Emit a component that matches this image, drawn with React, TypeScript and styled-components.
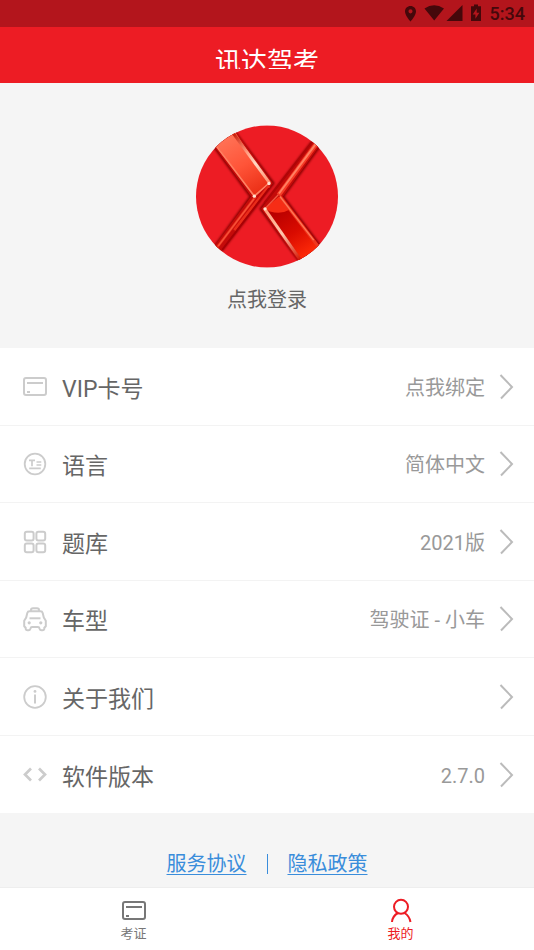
import React from "react";
import styled, { createGlobalStyle } from "styled-components";

const GlobalStyle = createGlobalStyle`
  * { box-sizing: border-box; }
  body {
    margin: 0;
    background: #f5f5f5;
    font-family: Roboto, "Noto Sans CJK SC", sans-serif;
    color: #666;
  }
  button { font: inherit; color: inherit; background: none; border: 0; padding: 0; cursor: pointer; }
  svg { display: block; flex: none; }
`;

const Screen = styled.div`
  display: flex;
  flex-direction: column;
  min-height: 100vh;
`;

const StatusBar = styled.div`
  display: flex;
  align-items: center;
  justify-content: flex-end;
  height: 27px;
  padding-right: 9px;
  background: #b3151c;
  color: #45080b;
  font-size: 18px;
  font-weight: 500;
  line-height: 27px;
`;

const Clock = styled.time`
  margin-left: 8px;
`;

const Header = styled.header`
  display: flex;
  flex-direction: column;
  align-items: center;
  height: 56px;
  padding-top: 16px;
  background: #ed1c24;
`;

const Title = styled.h1`
  margin: 0;
  height: 26px;
  overflow: hidden;
  color: #fff;
  font-size: 26px;
  font-weight: 400;
  line-height: 38px;
`;

const Main = styled.main`
  flex: 1;
`;

const Profile = styled.button`
  display: flex;
  flex-direction: column;
  align-items: center;
  gap: 17px;
  width: 100%;
  height: 265px;
  padding-top: 42px;
  && {
    font-size: 20px;
    line-height: 30px;
  }
`;

const List = styled.ul`
  margin: 0;
  padding: 0;
  list-style: none;
  background: #fff;
`;

const Item = styled.li`
  height: 78px;
  border-bottom: 1px solid #f3f3f3;
  &:nth-child(even) { height: 77px; }
  &:last-child { border-bottom: 0; }
`;

const Row = styled.button`
  display: flex;
  align-items: center;
  width: 100%;
  height: 100%;
  padding: 0 20px 0 22px;
  text-align: left;
`;

const RowIcon = styled.svg`
  fill: none;
  stroke: #ccc;
  stroke-width: 2;
`;

const Label = styled.span`
  flex: 1;
  margin-left: 14px;
  padding-top: 6px;
  font-size: 23px;
  line-height: 34px;
`;

const Value = styled.span`
  padding-top: 2px;
  margin-right: 14px;
  color: #999;
  font-size: 20px;
  line-height: 30px;
`;

const Legal = styled.nav`
  display: flex;
  align-items: center;
  justify-content: center;
  gap: 20px;
  height: 74px;
  padding-top: 28px;
  font-size: 20px;
  line-height: 30px;
`;

const LegalLink = styled.a`
  color: #3a8ddb;
  text-decoration: underline;
  text-decoration-thickness: 1px;
  text-underline-offset: 3px;
`;

const Divider = styled.span`
  width: 1px;
  height: 20px;
  background: #3a8ddb;
`;

const TabBar = styled.nav`
  position: sticky;
  bottom: 0;
  display: grid;
  grid-template-columns: 1fr 1fr;
  height: 63px;
  border-top: 1px solid #eee;
  background: #fff;
`;

const Tab = styled.button<{ $active?: boolean }>`
  display: flex;
  flex-direction: column;
  align-items: center;
  padding-top: 10px;
  && {
    color: ${(p) => (p.$active ? "#ed1c24" : "#777")};
    font-size: 13px;
    line-height: 20px;
  }
`;

const TabIcon = styled.svg`
  fill: none;
  stroke: currentColor;
  stroke-width: 2;
`;

function CardShape() {
  return (
    <>
      <rect x="2" y="4" width="22" height="17" rx="2" />
      <path d="M5 9H21M5 18H8" />
    </>
  );
}

const shapes: Record<string, React.ReactNode> = {
  card: <CardShape />,
  language: (
    <>
      <circle cx="13" cy="13" r="10.3" strokeWidth="1.8" />
      <path d="M7 9.3H13M10 9.3V15.3M14.5 11H19.3M14.5 14H19.3M7.2 17.4H18.8" strokeWidth="1.7" />
    </>
  ),
  grid: (
    <>
      <rect x="2.8" y="2.8" width="8.8" height="8.8" rx="2" />
      <rect x="14.4" y="2.8" width="8.8" height="8.8" rx="2" />
      <rect x="2.8" y="14.4" width="8.8" height="8.8" rx="2" />
      <rect x="14.4" y="14.4" width="8.8" height="8.8" rx="2" />
    </>
  ),
  taxi: (
    <>
      <path d="M9 5V4Q9 2.3 11 2.3H15Q17 2.3 17 4V5M7.5 5.3H18.5Q20.2 5.3 20.7 7L21.8 11.5L23.8 14.8V20.2L22.3 21.8V23Q22 24.3 20.5 24.3H19.5Q18 24.3 17.5 22.5Q17.2 21 16 21H10Q8.8 21 8.5 22.5Q8 24.3 6.5 24.3H5.5Q4 24.3 3.7 23V21.8L2.2 20.2V14.8L4.2 11.5L5.3 7Q5.8 5.3 7.5 5.3Z" strokeLinejoin="round" />
      <path d="M7.5 12.3H18.5" />
      <circle cx="7.2" cy="16.8" r="1.6" fill="#ccc" stroke="none" />
      <circle cx="18.8" cy="16.8" r="1.6" fill="#ccc" stroke="none" />
    </>
  ),
  info: (
    <>
      <circle cx="13" cy="13" r="10.8" strokeWidth="1.8" />
      <path d="M13 10.5V19.5" />
      <circle cx="13" cy="7.4" r="1.4" fill="#ccc" stroke="none" />
    </>
  ),
  code: <path d="M9 6.5L3 12.5L9 18.5M17 6.5L23 12.5L17 18.5" strokeWidth="2.7" />,
};

const rows = [
  { icon: "card", label: "VIP卡号", value: "点我绑定" },
  { icon: "language", label: "语言", value: "简体中文" },
  { icon: "grid", label: "题库", value: "2021版" },
  { icon: "taxi", label: "车型", value: "驾驶证 - 小车" },
  { icon: "info", label: "关于我们", value: "" },
  { icon: "code", label: "软件版本", value: "2.7.0" },
];

function Logo() {
  return (
    <svg width="142" height="143" viewBox="27 25 426 428" aria-hidden="true">
      <defs>
        <clipPath id="disc"><circle cx="240" cy="239" r="213" /></clipPath>
        <filter id="soft" x="-10%" y="-10%" width="120%" height="120%"><feGaussianBlur stdDeviation="3" /></filter>
        <filter id="glow" x="-20%" y="-20%" width="140%" height="140%"><feGaussianBlur stdDeviation="1.5" /></filter>
        <linearGradient id="upper" gradientUnits="userSpaceOnUse" x1="120" y1="60" x2="220" y2="230">
          <stop offset="0" stopColor="#ff7256" />
          <stop offset=".5" stopColor="#ff5438" />
          <stop offset="1" stopColor="#ea2d14" />
        </linearGradient>
        <linearGradient id="lower" gradientUnits="userSpaceOnUse" x1="275" y1="280" x2="365" y2="415">
          <stop offset="0" stopColor="#b80000" />
          <stop offset=".5" stopColor="#d90b00" />
          <stop offset="1" stopColor="#ff2b08" />
        </linearGradient>
        <linearGradient id="edgeA" gradientUnits="userSpaceOnUse" x1="140" y1="55" x2="245" y2="200">
          <stop offset="0" stopColor="#c9200d" />
          <stop offset=".35" stopColor="#ff9a7d" />
          <stop offset=".6" stopColor="#ffd9c5" />
          <stop offset="1" stopColor="#ff8e6c" />
        </linearGradient>
        <linearGradient id="edgeB" gradientUnits="userSpaceOnUse" x1="235" y1="275" x2="340" y2="425">
          <stop offset="0" stopColor="#ff9d7b" />
          <stop offset=".5" stopColor="#ffc7ae" />
          <stop offset="1" stopColor="#d51c08" />
        </linearGradient>
      </defs>
      <g clipPath="url(#disc)">
        <rect x="27" y="25" width="426" height="428" fill="#ed1c24" />
        <g fill="#850003" stroke="#850003" strokeWidth="3" filter="url(#soft)">
          <path d="M60 64L133 28L262 199L106 402L80 390L188 239Z" />
          <path d="M420 411L347 450L218 276L374 73L400 89L291 239Z" />
        </g>
        <path d="M64 66L136 30L258 199L102 402L82 388L192 239Z" fill="#c40b0a" />
        <path d="M416 410L344 448L222 276L378 73L398 87L288 239Z" fill="#c40b0a" />
        <path d="M68 58L132 27L246 200L202 239Z" fill="url(#upper)" />
        <path d="M138 48L248 199" fill="none" stroke="url(#edgeA)" strokeWidth="9" filter="url(#glow)" />
        <path d="M70 64L202 238L245 200" fill="none" stroke="#ff8062" strokeWidth="5" />
        <path d="M206 239L90 392M246 207L142 340" fill="none" stroke="#e92c1a" strokeWidth="8" />
        <path d="M201 246L94 387" fill="none" stroke="#f6533b" strokeWidth="4" />
        <path d="M246 214L106 398" fill="none" stroke="#a90005" strokeWidth="5" />
        <path d="M233 277L276 239L412 416L350 447Z" fill="url(#lower)" />
        <path d="M233 275L276 239L307 279Q282 294 249 284Z" fill="#f62d16" />
        <path d="M390 78L275 235" fill="none" stroke="#f63b26" strokeWidth="14" />
        <path d="M386 82L276 230" fill="none" stroke="#ff8063" strokeWidth="6" />
        <path d="M374 78L232 259" fill="none" stroke="#b00507" strokeWidth="6" />
        <path d="M274 234L235 274" fill="none" stroke="#f15943" strokeWidth="4" />
        <path d="M279 239L405 404" fill="none" stroke="#ef381e" strokeWidth="9" />
        <path d="M279 239L380 370" fill="none" stroke="#ff7858" strokeWidth="4" />
        <path d="M233 276L342 432" fill="none" stroke="url(#edgeB)" strokeWidth="9" filter="url(#glow)" />
        <g fill="#ffe3d1" filter="url(#glow)">
          <circle cx="246" cy="200" r="5" />
          <circle cx="202" cy="238" r="5" />
          <circle cx="234" cy="276" r="5" />
        </g>
      </g>
    </svg>
  );
}

function StatusIcons() {
  return (
    <svg width="80" height="27" viewBox="0 0 80 27" fill="currentColor" aria-hidden="true">
      <path fillRule="evenodd" d="M8.5 6C5.4 6 3 8.4 3 11.4C3 15.4 8.5 21.5 8.5 21.5S14 15.4 14 11.4C14 8.4 11.6 6 8.5 6ZM8.5 9.3A2 2 0 1 1 8.5 13.4A2 2 0 1 1 8.5 9.3Z" />
      <path d="M22.5 8.5Q32 2 42 8.5L32.2 20.5Z" />
      <path d="M60.5 5V21H44.5Z" />
      <path fillRule="evenodd" d="M72 4.5H76V6.3H79V21H69V6.3H72ZM74.7 8.5L70.7 14.4H73.4V18.8L77.4 12.8H74.7Z" />
    </svg>
  );
}

export default function App() {
  return (
    <Screen>
      <GlobalStyle />
      <StatusBar>
        <StatusIcons />
        <Clock>5:34</Clock>
      </StatusBar>
      <Header>
        <Title>讯达驾考</Title>
      </Header>
      <Main>
        <Profile type="button">
          <Logo />
          点我登录
        </Profile>
        <List>
          {rows.map((row) => (
            <Item key={row.label}>
              <Row type="button">
                <RowIcon width="26" height="26" viewBox="0 0 26 26" aria-hidden="true">
                  {shapes[row.icon]}
                </RowIcon>
                <Label>{row.label}</Label>
                <Value>{row.value}</Value>
                <svg width="15" height="26" viewBox="0 0 15 26" fill="none" stroke="#bbb" strokeWidth="2" aria-hidden="true">
                  <path d="M1.5 1L13 13L2 24.5" />
                </svg>
              </Row>
            </Item>
          ))}
        </List>
        <Legal>
          <LegalLink href="#terms">服务协议</LegalLink>
          <Divider />
          <LegalLink href="#privacy">隐私政策</LegalLink>
        </Legal>
      </Main>
      <TabBar>
        <Tab type="button">
          <TabIcon width="26" height="26" viewBox="0 0 26 26" aria-hidden="true">
            <CardShape />
          </TabIcon>
          考证
        </Tab>
        <Tab type="button" $active>
          <TabIcon width="26" height="26" viewBox="0 0 26 26" aria-hidden="true">
            <circle cx="13" cy="8.8" r="7" />
            <path d="M4 24Q4.5 18 10 15M16.5 15Q21.5 18 22.5 24" />
          </TabIcon>
          我的
        </Tab>
      </TabBar>
    </Screen>
  );
}
